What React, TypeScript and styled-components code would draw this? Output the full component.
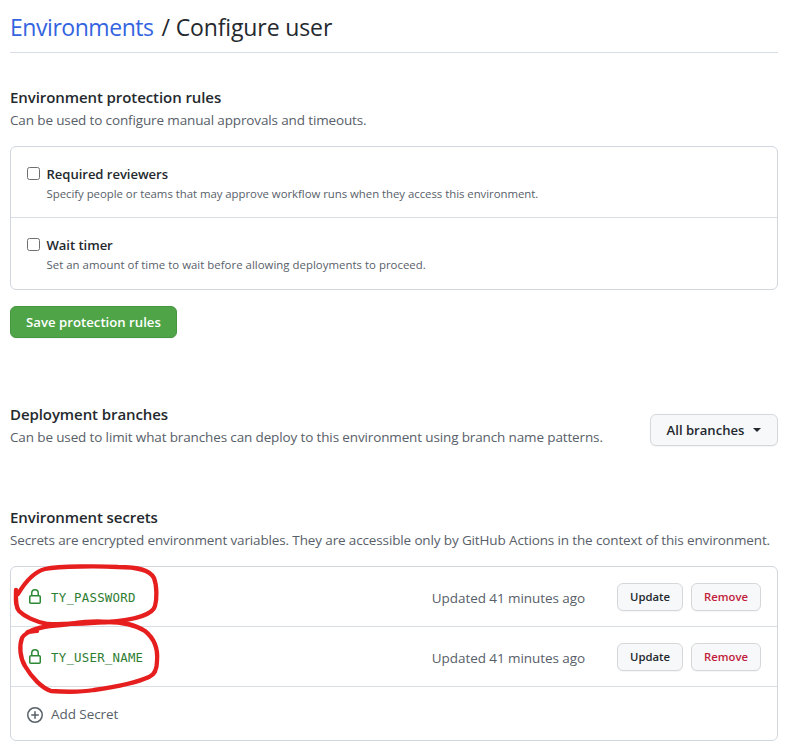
import React from 'react';
import styled, { createGlobalStyle } from 'styled-components';

const GlobalStyle = createGlobalStyle`
  *, *::before, *::after { box-sizing: border-box; }
  body {
    margin: 0;
    background: #fff;
    color: #24292e;
    font-family: "Open Sans", "Noto Sans", sans-serif;
  }
`;

const Page = styled.main`
  width: 768px;
  margin-left: 10px;
`;

const PageHeader = styled.header`
  height: 53px;
  padding-top: 9px;
  border-bottom: 1px solid #d8dee4;
`;

const PageTitle = styled.h1`
  margin: 0;
  font-size: 23px;
  font-weight: 400;
  line-height: 36px;
  letter-spacing: -0.12px;
`;

const TitleLink = styled.a`
  margin-right: 2px;
  color: #3464e0;
  letter-spacing: -0.45px;
  text-decoration: none;
`;

const Section = styled.section<{ $top: number }>`
  padding-top: ${(p) => p.$top}px;
`;

const SectionBar = styled.div`
  display: flex;
  align-items: flex-start;
  justify-content: space-between;
`;

const SectionTitle = styled.h2`
  margin: 0;
  font-size: 15px;
  font-weight: 600;
  line-height: 24px;
  letter-spacing: -0.08px;
`;

const Description = styled.p`
  margin: 0;
  color: #586069;
  font-size: 13.5px;
  line-height: 21px;
  letter-spacing: -0.135px;
  white-space: nowrap;
`;

const SectionHeading = styled.div`
  display: flex;
  flex-direction: column;
  gap: 1px;
`;

const Box = styled.div<{ $top: number }>`
  margin-top: ${(p) => p.$top}px;
  border: 1px solid #d0d7de;
  border-radius: 6px;
`;

const RuleRow = styled.label`
  display: flex;
  height: 70px;
  padding: 16px;
  & + & {
    height: 72px;
    border-top: 1px solid #d8dee4;
  }
`;

const Checkbox = styled.input`
  appearance: none;
  width: 13px;
  height: 13px;
  margin: 4px 6.5px 0 0;
  border: 1px solid #6e6e6e;
  border-radius: 2.5px;
  background: #fff;
`;

const RuleText = styled.div`
  display: flex;
  flex-direction: column;
`;

const RuleName = styled.span`
  font-size: 13.1px;
  font-weight: 600;
  line-height: 22px;
  letter-spacing: -0.05px;
`;

const RuleNote = styled.span<{ $tracking: number }>`
  color: #586069;
  font-size: 11.4px;
  line-height: 18px;
  letter-spacing: ${(p) => p.$tracking}px;
`;

const Button = styled.button<{ $width: number; $danger?: boolean }>`
  display: flex;
  align-items: center;
  justify-content: center;
  width: ${(p) => p.$width}px;
  height: 28px;
  padding: 0;
  border: 1px solid #d5d8da;
  border-radius: 6px;
  background: #f6f8fa;
  box-shadow: 0 1px 0 rgba(27, 31, 35, 0.04);
  color: ${(p) => (p.$danger ? '#c21c3a' : '#24292e')};
  font: 600 11.3px/18px "Open Sans", sans-serif;
`;

const PrimaryButton = styled(Button)`
  height: 32px;
  margin-top: 16px;
  border-color: #46963f;
  background: #4ea447;
  color: #fff;
  font-size: 13.2px;
`;

const BranchButton = styled(Button)`
  height: 32px;
  margin-top: 12px;
  font-size: 13.1px;
`;

const Caret = styled.i`
  margin-left: 9px;
  border: 4px solid transparent;
  border-top-color: #24292e;
  border-bottom: 0;
`;

const SecretsBox = styled(Box)`
  position: relative;
`;

const SecretRow = styled.div`
  display: flex;
  align-items: center;
  height: 60px;
  padding: 0 16px;
  border-bottom: 1px solid #d8dee4;
`;

const SecretName = styled.code`
  flex: 1;
  margin-left: 8px;
  padding-top: 2px;
  color: #2f7d32;
  font: 12.4px/20px "DejaVu Sans Mono", monospace;
  letter-spacing: 0.23px;
`;

const Timestamp = styled.span`
  margin-right: 32px;
  padding-top: 2px;
  color: #586069;
  font-size: 13.5px;
  line-height: 20px;
  letter-spacing: -0.07px;
`;

const Actions = styled.div`
  display: flex;
  gap: 8px;
`;

const AddRow = styled.div`
  display: flex;
  align-items: center;
  height: 53px;
  padding: 2px 16px 0;
  color: #586069;
`;

const AddLabel = styled.span`
  margin-left: 8px;
  padding-bottom: 2px;
  font-size: 13.5px;
  line-height: 20px;
  letter-spacing: -0.06px;
`;

const Icon = styled.svg<{ $color: string }>`
  flex: none;
  width: 16px;
  height: 16px;
  fill: ${(p) => p.$color};
`;

const Scribble = styled.svg`
  position: absolute;
  left: -11px;
  top: -7px;
  width: 180px;
  height: 140px;
  overflow: visible;
  pointer-events: none;
  fill: none;
  stroke: #e61e1e;
  stroke-width: 4.3;
  stroke-linecap: round;
  stroke-linejoin: round;
`;

const LockIcon = () => (
  <Icon viewBox="0 0 16 16" $color="#2c8a36">
    <path
      fillRule="evenodd"
      d="M4 4v2h-.25A1.75 1.75 0 002 7.75v5.5c0 .966.784 1.75 1.75 1.75h8.5A1.75 1.75 0 0014 13.25v-5.5A1.75 1.75 0 0012.25 6H12V4a4 4 0 10-8 0zm6.5 2V4a2.5 2.5 0 00-5 0v2h5zM12 7.5h.25a.25.25 0 01.25.25v5.5a.25.25 0 01-.25.25h-8.5a.25.25 0 01-.25-.25v-5.5a.25.25 0 01.25-.25H12z"
    />
  </Icon>
);

const PlusCircleIcon = () => (
  <Icon viewBox="0 0 16 16" $color="#586069">
    <path
      fillRule="evenodd"
      d="M8 0a8 8 0 100 16A8 8 0 008 0zM1.5 8a6.5 6.5 0 1113 0 6.5 6.5 0 01-13 0zM7.25 4.75a.75.75 0 011.5 0v2.5h2.5a.75.75 0 010 1.5h-2.5v2.5a.75.75 0 01-1.5 0v-2.5h-2.5a.75.75 0 010-1.5h2.5z"
    />
  </Icon>
);

const rules = [
  {
    name: 'Required reviewers',
    note: 'Specify people or teams that may approve workflow runs when they access this environment.',
    tracking: -0.035,
  },
  {
    name: 'Wait timer',
    note: 'Set an amount of time to wait before allowing deployments to proceed.',
    tracking: 0.025,
  },
];

const secrets = ['TY_PASSWORD', 'TY_USER_NAME'];

export default function App() {
  return (
    <>
      <GlobalStyle />
      <Page>
        <PageHeader>
          <PageTitle>
            <TitleLink>Environments</TitleLink> / Configure user
          </PageTitle>
        </PageHeader>

        <Section $top={32}>
          <SectionHeading>
            <SectionTitle>Environment protection rules</SectionTitle>
            <Description>Can be used to configure manual approvals and timeouts.</Description>
          </SectionHeading>
          <Box $top={15}>
            {rules.map((rule) => (
              <RuleRow key={rule.name}>
                <Checkbox type="checkbox" />
                <RuleText>
                  <RuleName>{rule.name}</RuleName>
                  <RuleNote $tracking={rule.tracking}>{rule.note}</RuleNote>
                </RuleText>
              </RuleRow>
            ))}
          </Box>
          <PrimaryButton $width={167}>Save protection rules</PrimaryButton>
        </Section>

        <Section $top={64}>
          <SectionBar>
            <SectionHeading>
              <SectionTitle>Deployment branches</SectionTitle>
              <Description>
                Can be used to limit what branches can deploy to this environment using branch name patterns.
              </Description>
            </SectionHeading>
            <BranchButton $width={128}>
              All branches
              <Caret />
            </BranchButton>
          </SectionBar>
        </Section>

        <Section $top={57}>
          <SectionHeading>
            <SectionTitle>Environment secrets</SectionTitle>
            <Description>
              Secrets are encrypted environment variables. They are accessible only by GitHub Actions in the context of
              this environment.
            </Description>
          </SectionHeading>
          <SecretsBox $top={15}>
            {secrets.map((name) => (
              <SecretRow key={name}>
                <LockIcon />
                <SecretName>{name}</SecretName>
                <Timestamp>Updated 41 minutes ago</Timestamp>
                <Actions>
                  <Button $width={66}>Update</Button>
                  <Button $width={70} $danger>
                    Remove
                  </Button>
                </Actions>
              </SecretRow>
            ))}
            <AddRow>
              <PlusCircleIcon />
              <AddLabel>Add Secret</AddLabel>
            </AddRow>
            <Scribble viewBox="0 0 180 140">
              <path d="M16 30C16 33 17 35 18 34C24 24 33 12 45 9C60 6 100 6 118 7C139 7 150 10 154 18C157 26 157 39 155 46C153 54 136 60 107 62C88 63 64 65 48 64C35 62 24 56 19 51C15 46 16 38 16 30" />
              <path d="M27 73C27 71 31 72 37 71M27 73C33 69 45 66 61 65C77 63 91 60 107 62C123 62 134 64 145 71C155 79 158 90 157 101C157 109 154 115 149 117C138 122 115 127 94 130C82 132 65 132 51 131C42 128 32 118 25 106C20 98 19 86 22 78C24 74 30 71 37 69" />
            </Scribble>
          </SecretsBox>
        </Section>
      </Page>
    </>
  );
}
